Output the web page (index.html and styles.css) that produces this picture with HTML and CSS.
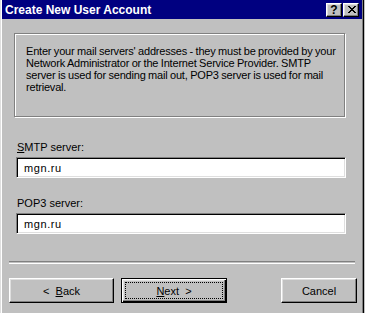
FILE: index.html
```
<!DOCTYPE html>
<html lang="en">
<head>
  <meta charset="UTF-8" />
  <title>Create New User Account</title>
  <link rel="stylesheet" href="styles.css">
</head>
<body>
  <div class="window">
    <div class="titlebar">
      <span class="title">Create New User Account</span>
      <div class="caption-btns">
        <span class="cap-btn help">?</span>
        <span class="cap-btn close">
          <svg width="8" height="7" viewBox="0 0 8 7"><path d="M0 0h2v1H0zM6 0h2v1H6zM1 1h2v1H1zM5 1h2v1H5zM2 2h4v1H2zM3 3h2v1H3zM2 4h4v1H2zM1 5h2v1H1zM5 5h2v1H5zM0 6h2v1H0zM6 6h2v1H6z" fill="#000"/></svg>
        </span>
      </div>
    </div>

    <div class="info">
      <p>Enter your mail servers' addresses - they must be provided by your<br>Network Administrator or the Internet Service Provider. SMTP<br>server is used for sending mail out, POP3 server is used for mail<br>retrieval.</p>
    </div>

    <label class="field-label first" for="smtp"><u>S</u>MTP server:</label>
    <input class="field" type="text" id="smtp" value="mgn.ru">

    <label class="field-label" for="pop3">POP3 server:</label>
    <input class="field" type="text" id="pop3" value="mgn.ru">

    <div class="separator"></div>

    <div class="buttons">
      <button class="btn">&lt;&nbsp;&nbsp;<u>B</u>ack</button>
      <button class="btn default"><span class="focus"><u>N</u>ext&nbsp;&nbsp;&gt;</span></button>
      <button class="btn cancel">Cancel</button>
    </div>
  </div>
</body>
</html>
```

FILE: styles.css
```
body { margin: 0; background: #c0c0c0; font-family: 'Liberation Sans', Arial, sans-serif; font-size: 11px; color: #000; }
.window { width: 364px; height: 313px; box-sizing: border-box; background: #c0c0c0; border-left: 1px solid #dfdfdf; border-right: 1px solid #000; padding: 0 1px; box-shadow: inset 1px 0 #fff, inset -1px 0 #808080; overflow: hidden; }

.titlebar { height: 19px; background: #000080; display: flex; align-items: center; padding: 0 3px 0 3px; }
.title { color: #fff; font-weight: bold; font-size: 12px; }
.caption-btns { margin-left: auto; display: flex; gap: 1px; }
.cap-btn { width: 16px; height: 14px; box-sizing: border-box; background: #c0c0c0; border: 1px solid; border-color: #fff #000 #000 #fff; box-shadow: inset -1px -1px #808080, inset 1px 1px #dfdfdf; display: flex; align-items: center; justify-content: center; }
.cap-btn.help { font-weight: bold; font-size: 12px; line-height: 12px; }
.cap-btn.close svg { display: block; margin-left: 1px; }

.info { margin: 14px 0 0 12px; width: 331px; height: 84px; box-sizing: border-box; border: 1px solid #808080; box-shadow: inset 1px 1px #fff, 1px 1px #fff; padding: 11px 0 0 11px; }
.info p { margin: 0; white-space: nowrap; line-height: 12px; letter-spacing: -0.2px; word-spacing: -0.3px; }

.field-label { display: block; margin: 19px 0 3px 15px; line-height: 13px; }
.field-label.first { margin-top: 24px; }
.field { display: block; margin-left: 14px; width: 330px; height: 21px; box-sizing: border-box; border: 1px solid; border-color: #808080 #fff #fff #808080; box-shadow: inset 1px 1px #000, inset -1px -1px #dfdfdf; background: #fff; padding: 0 0 0 7px; font-family: 'Liberation Sans', Arial, sans-serif; font-size: 11px; letter-spacing: 0.6px; color: #000; outline: none; }

.separator { margin: 27px 0 0 7px; width: 346px; height: 1px; border-top: 1px solid #808080; border-bottom: 1px solid #fff; }

.buttons { display: flex; margin-top: 14px; padding: 0 5px 0 7px; gap: 7px; }
.btn { width: 105px; height: 25px; box-sizing: border-box; background: #c0c0c0; border: 1px solid; border-color: #fff #000 #000 #fff; box-shadow: inset -1px -1px #808080, inset 1px 1px #dfdfdf; font-family: 'Liberation Sans', Arial, sans-serif; font-size: 11px; color: #000; padding: 0; display: flex; align-items: center; justify-content: center; }
.btn.default { width: 106px; border: 1px solid #000; box-shadow: inset 1px 1px #fff, inset -1px -1px #000, inset -2px -2px #808080, inset 2px 2px #dfdfdf; padding: 3px; }
.btn.default .focus { flex: 1; align-self: stretch; border: 1px dotted #000; display: flex; align-items: center; justify-content: center; }
.btn.cancel { width: 76px; margin-left: auto; }
```
